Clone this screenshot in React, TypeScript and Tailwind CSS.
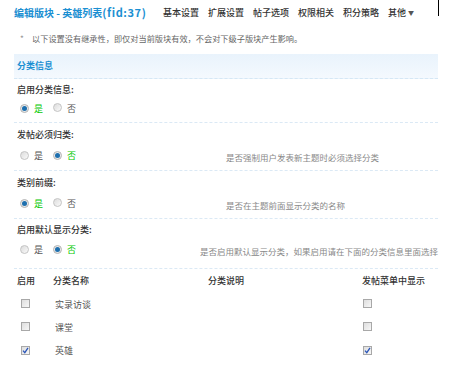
import React from "react";

const font = {
  fontFamily: '"Noto Sans CJK SC", "Liberation Sans", sans-serif',
};

const nav = ["基本设置", "扩展设置", "帖子选项", "权限相关", "积分策略"];

function Radio({ checked }: { checked: boolean }) {
  if (checked) {
    return (
      <span className="inline-flex h-[9px] w-[9px] items-center justify-center rounded-full border border-[#b4b4b4] bg-[#e9e9e9]">
        <span className="h-[5px] w-[5px] rounded-full bg-[#1d6fae]" />
      </span>
    );
  }
  return (
    <span className="inline-block h-[9px] w-[9px] rounded-full border border-[#c4c4c4] bg-gradient-to-br from-[#dcdcdc] to-[#fafafa]" />
  );
}

function RadioPair({ yes }: { yes: boolean }) {
  return (
    <div className="flex items-center text-[9px] leading-none">
      <Radio checked={yes} />
      <span className={`ml-[5px] ${yes ? "text-[#00c800]" : "text-[#555]"}`}>
        是
      </span>
      <span className="ml-[10px]">
        <Radio checked={!yes} />
      </span>
      <span className={`ml-[5px] ${!yes ? "text-[#00c800]" : "text-[#555]"}`}>
        否
      </span>
    </div>
  );
}

function Checkbox({ checked }: { checked?: boolean }) {
  return (
    <span className="inline-flex h-[9px] w-[9px] items-center justify-center border border-[#a8a8a8] bg-gradient-to-br from-[#dedede] to-[#f7f7f7]">
      {checked && (
        <svg width="7" height="7" viewBox="0 0 7 7">
          <path
            d="M1 3.6 L2.8 5.6 L6 0.8"
            fill="none"
            stroke="#2a55b8"
            strokeWidth="1.3"
          />
        </svg>
      )}
    </span>
  );
}

interface Setting {
  label: string;
  yes: boolean;
  desc?: string;
  rowClass: string;
  gapClass: string;
}

const settings: Setting[] = [
  { label: "启用分类信息:", yes: true, rowClass: "pt-[4px] pb-[7px]", gapClass: "mt-[4px]" },
  {
    label: "发帖必须归类:",
    yes: false,
    desc: "是否强制用户发表新主题时必须选择分类",
    rowClass: "pt-[5px] pb-[8px]",
    gapClass: "mt-[6px]",
  },
  {
    label: "类别前缀:",
    yes: true,
    desc: "是否在主题前面显示分类的名称",
    rowClass: "pt-[5px] pb-[8px]",
    gapClass: "mt-[6px]",
  },
  {
    label: "启用默认显示分类:",
    yes: false,
    desc: "是否启用默认显示分类，如果启用请在下面的分类信息里面选择",
    rowClass: "pt-[4px] pb-[12px]",
    gapClass: "mt-[5px]",
  },
];

const categories = [
  { name: "实录访谈", on: false },
  { name: "课堂", on: false },
  { name: "英雄", on: true },
];

export default function App() {
  return (
    <div className="h-[368px] w-[452px] overflow-hidden bg-white" style={font}>
      {/* Title + nav */}
      <div className="flex h-[25px] w-[439px] items-start pl-[14px]">
        <div className="mt-[5px] w-[149px] whitespace-nowrap text-[10px] font-bold leading-[14px] text-[#1b8fd2]">
          编辑版块 - 英雄列表
          <span className="text-[11px] tracking-[0.6px]">(fid:37)</span>
        </div>
        <div className="mt-[6px] flex gap-[9px] text-[9px] font-medium leading-[13px] text-[#333]">
          {nav.map((n) => (
            <span key={n}>{n}</span>
          ))}
          <span className="flex items-center">
            其他
            <span className="ml-[2px] text-[6px] text-[#555]">▼</span>
          </span>
        </div>
        <div className="ml-auto h-[16px] w-px bg-black" />
      </div>

      {/* Notice */}
      <div className="flex h-[26px] items-center pl-[20px] text-[8.2px] text-[#666]">
        <span className="w-[12px] text-[#999]">*</span>
        <span>以下设置没有继承性，即仅对当前版块有效，不会对下级子版块产生影响。</span>
      </div>

      <div className="ml-[14px] mt-[3px] w-[424px]">
        {/* Section header */}
        <div className="flex h-[25px] items-center border-b border-dashed border-[#d5e7f5] bg-gradient-to-b from-[#e9f3fc] to-[#f4f9fe] pl-[3px] text-[9px] font-bold text-[#1b8fd2]">
          分类信息
        </div>

        {settings.map((s) => (
          <div
            key={s.label}
            className={`border-b border-dashed border-[#dbe9f5] pl-[3px] ${s.rowClass}`}
          >
            <div className="h-[14px] text-[9px] font-medium leading-[14px] text-[#333]">
              {s.label}
            </div>
            <div className={`flex h-[14px] items-center ${s.gapClass}`}>
              <div className="w-[209px] pl-[3px]">
                <RadioPair yes={s.yes} />
              </div>
              {s.desc && (
                <div className="mt-[5px] whitespace-nowrap text-[8.5px] text-[#888]">
                  {s.desc}
                </div>
              )}
            </div>
          </div>
        ))}

        {/* Category table */}
        <div className="flex h-[24px] items-center pl-[3px] text-[9px] font-medium text-[#333]">
          <span className="w-[36px]">启用</span>
          <span className="w-[155px]">分类名称</span>
          <span className="w-[154px]">分类说明</span>
          <span>发帖菜单中显示</span>
        </div>
        {categories.map((c) => (
          <div
            key={c.name}
            className="flex h-[23px] items-center pl-[3px] text-[9px] text-[#555]"
          >
            <span className="w-[36px] pl-[4px]">
              <Checkbox checked={c.on} />
            </span>
            <span className="w-[155px] pl-[2px]">{c.name}</span>
            <span className="w-[154px]" />
            <span className="pl-[1px]">
              <Checkbox checked={c.on} />
            </span>
          </div>
        ))}
      </div>
    </div>
  );
}
